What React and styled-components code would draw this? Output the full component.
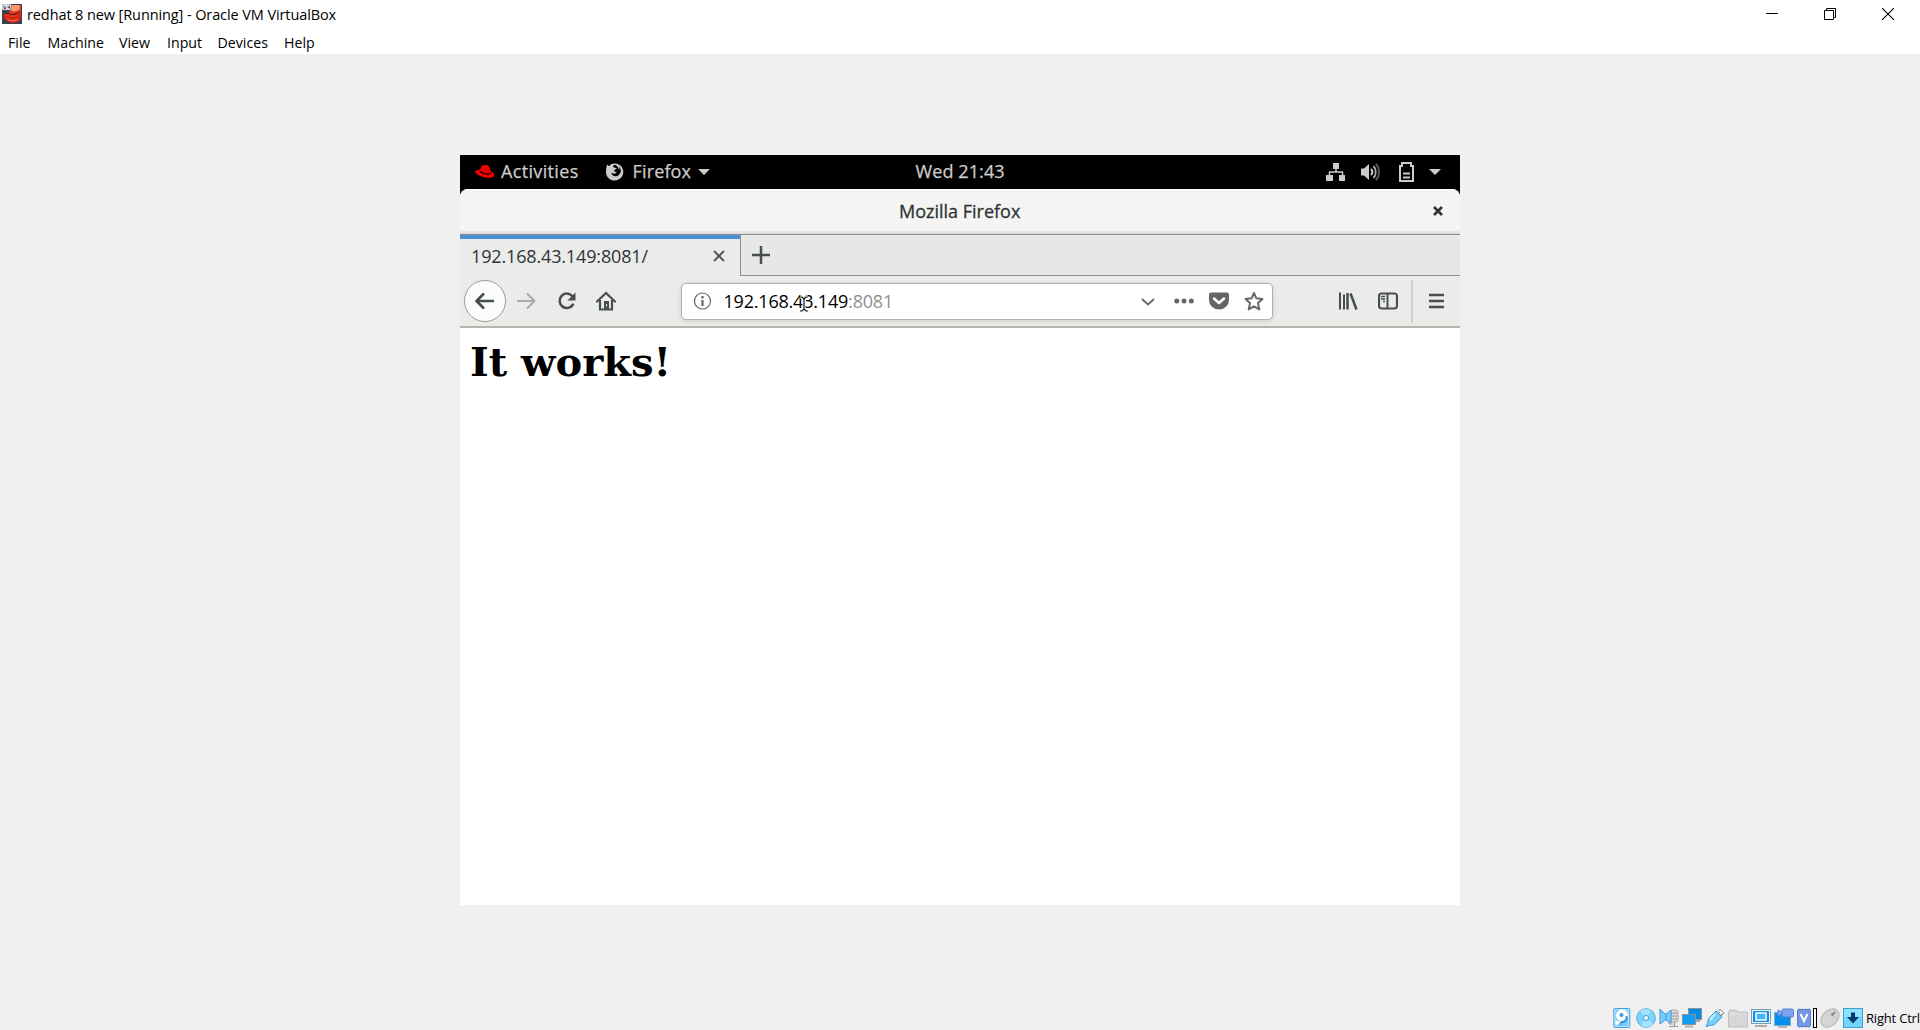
import React from "react";
import styled, { createGlobalStyle } from "styled-components";

const GlobalStyle = createGlobalStyle`
  html, body { margin: 0; height: 100%; overflow: hidden; }
  *, *::before, *::after { box-sizing: border-box; }
  svg { display: block; flex: none; }
`;

const Host = styled.div`
  width: 1920px;
  height: 1030px;
  display: flex;
  flex-direction: column;
  background: #f0f0f0;
  color: #000;
  font-family: "Open Sans", "Noto Sans", sans-serif;
`;

const TitleBar = styled.header`
  display: flex;
  align-items: center;
  height: 30px;
  padding: 0 26px 2px 2px;
  background: #fff;
`;

const HostTitle = styled.span`
  margin-left: 5px;
  flex: 1;
  font-size: 14.5px;
  line-height: 28px;
  padding-top: 1px;
  letter-spacing: -0.1px;
  white-space: pre;
`;

const WindowButtons = styled.div`
  display: flex;
  gap: 46px;
  align-items: center;
  height: 28px;
`;

const MenuBar = styled.nav`
  display: flex;
  height: 24px;
  padding-left: 8px;
  background: #fff;
`;

const MenuItem = styled.span`
  width: ${(p) => p.$width}px;
  font-size: 14.2px;
  line-height: 25px;
  white-space: nowrap;
`;

const Viewport = styled.main`
  flex: 1;
  display: flex;
  justify-content: center;
  align-items: flex-start;
  padding-top: 101px;
`;

const Guest = styled.section`
  position: relative;
  width: 1000px;
  height: 750px;
  display: flex;
  flex-direction: column;
  background: #000;
`;

const Panel = styled.div`
  display: grid;
  grid-template-columns: 1fr auto 1fr;
  align-items: center;
  height: 34px;
  padding: 0 19px 0 15px;
  color: #ccc;
`;

const PanelGroup = styled.div`
  display: flex;
  align-items: center;
  justify-content: ${(p) => (p.$end ? "flex-end" : "flex-start")};
`;

const PanelText = styled.span`
  width: ${(p) => p.$width}px;
  margin: 0 ${(p) => p.$right || 0}px 0 ${(p) => p.$left || 0}px;
  font-size: 18px;
  font-weight: 500;
  line-height: 32px;
  padding-bottom: 2px;
  letter-spacing: ${(p) => p.$track || 0}px;
  -webkit-text-stroke: 0.25px currentColor;
  white-space: nowrap;
`;

const Spacer = styled.i`
  flex: none;
  width: ${(p) => p.$width}px;
`;

const Browser = styled.div`
  flex: 1;
  display: flex;
  flex-direction: column;
  overflow: hidden;
  border-radius: 8px 8px 0 0;
  background: #fff;
`;

const BrowserHeader = styled.div`
  display: grid;
  grid-template-columns: 1fr auto 1fr;
  align-items: center;
  height: 46px;
  padding: 0 17px 2px;
  background: linear-gradient(#fff 0 1px, #f4f4f3 1px 42px, #e6e6e4 42px 44px, #d8d8d5 44px 45px, #8e8f8a 45px);
  color: #2e3436;
`;

const BrowserTitle = styled.h2`
  grid-column: 2;
  margin: 0;
  width: 122px;
  font-size: 18px;
  font-weight: 500;
  line-height: 42px;
  -webkit-text-stroke: 0.3px currentColor;
  white-space: nowrap;
`;

const CloseSlot = styled.div`
  display: flex;
  justify-content: flex-end;
`;

const TabStrip = styled.div`
  display: flex;
  height: 41px;
  background: #e7e7e5;
`;

const Tab = styled.div`
  display: flex;
  align-items: center;
  width: 281px;
  padding: 1px 15px 0 11px;
  border-right: 1px solid #8e8f8a;
  background: linear-gradient(#4a90d9 0 4px, #ebebea 4px);
  color: #2e3436;
`;

const TabText = styled.span`
  flex: 1;
  font-size: 18px;
  line-height: 40px;
  letter-spacing: -0.15px;
`;

const StripRest = styled.div`
  flex: 1;
  display: flex;
  align-items: center;
  padding-left: 11px;
  border-bottom: 1px solid #8e8f8a;
`;

const Toolbar = styled.div`
  display: flex;
  align-items: center;
  height: 52px;
  padding: 0 16px 0 4px;
  border-bottom: 2px solid #b6b6b0;
  background: #ebebe9;
`;

const BackButton = styled.div`
  display: flex;
  align-items: center;
  justify-content: center;
  width: 42px;
  height: 42px;
  border: 1px solid #9d9d99;
  border-radius: 50%;
  background: #fcfcfc;
`;

const UrlField = styled.div`
  display: flex;
  align-items: center;
  width: 592px;
  height: 37px;
  margin-left: 65px;
  padding: 0 8px 0 12px;
  border: 1px solid #b0b0ac;
  border-radius: 5px;
  background: #fff;
  box-shadow: 0 1px 5px rgba(0, 0, 0, 0.13);
`;

const UrlText = styled.span`
  flex: 1;
  margin-left: 11.5px;
  color: #000;
  font-size: 18px;
  line-height: 34px;
  letter-spacing: -0.5px;
  letter-spacing: -0.2px;
`;

const Port = styled.span`
  color: #8f8f8f;
`;

const Divider = styled.i`
  width: 2px;
  height: 43px;
  margin: 0 16px 0 13px;
  background: #d0d0ce;
`;

const Page = styled.article`
  flex: 1;
  padding: 10px 10px;
  background: #fff;
`;

const Heading = styled.h1`
  margin: 0;
  font: bold 40px/47px "DejaVu Serif", serif;
  color: #000;
  white-space: nowrap;
`;

const Pointer = styled.svg`
  position: absolute;
  left: 339px;
  top: 140px;
`;

const StatusBar = styled.footer`
  display: flex;
  align-items: center;
  justify-content: flex-end;
  height: 24px;
  gap: 3px;
`;

const ActivityBar = styled.i`
  width: 4px;
  height: 20px;
  margin-left: -1px;
  border: 1px solid #000;
  background: #f6f6f6;
`;

const HostKey = styled.span`
  width: 54px;
  font-size: 13px;
  line-height: 22px;
  letter-spacing: -0.2px;
  white-space: nowrap;
`;

const Icon = ({ w = 20, h = 20, children, ...rest }) => (
  <svg width={w} height={h} viewBox={`0 0 ${w} ${h}`} fill="none" {...rest}>
    {children}
  </svg>
);

const MachineIcon = () => (
  <Icon>
    <rect width="20" height="20" fill="#38424e" />
    <path d="M8 1h11v8c0 3-2 4-4 5-5 0-10 0-13-3 2-1 4-1 5-2z" fill="#e53a20" />
    <path d="M9 1h8c2 3 0 6-3 6-3 1-5 0-6-2z" fill="#ff9672" />
    <path d="M5 9c3 2 8 2 13-1" stroke="#6e1712" strokeWidth="1.300" />
    <path d="M1 9c2 4 10 5 14 3 2-1 4-3 4-5v6c0 4-4 6-9 6-5-1-9-4-9-10z" fill="#d82412" />
    <path d="M3 13c4 4 10 4 14 1-2 4-10 5-14-1z" fill="#ff8461" />
    <rect width="9" height="6" fill="#f5f5f5" stroke="#59616b" strokeWidth=".6" />
    <path d="M2 1.500v3M2 3h2v1.500H2M6 1.500v2h2M7.500 1.500v3.500" stroke="#444" strokeWidth=".8" />
  </Icon>
);

const HatIcon = () => (
  <Icon h={16}>
    <path d="M7 1.500c1-1 2.200-.5 3.200-.2 1-.6 3.500 0 4 1.400l1.500 4.600c2.700.8 4 2.700 3.300 4.500-.8 2.200-4.500 2.800-8.500 1.800C5 12.200.3 10.200.3 8c0-1.700 2-2.500 4.500-2z" fill="#e00" />
    <path d="M5 6.800c.6 2 5 3.500 8.500 3.400 1.500-.1 2.400-.8 2.200-2" stroke="#000" strokeWidth="1.200" />
  </Icon>
);

const FirefoxIcon = () => (
  <Icon>
    <path d="M2.200 2.500 4 4.300C5.300 2.700 7 1.500 9.500 1.500c5.300 0 8.800 3.700 8.800 8.500s-3.800 8.500-8.600 8.500S1 14.800 1 10.200C1 7 1.300 5 2.200 2.500z" fill="#ccc" />
    <path d="M9 2.800c-.8.800-1 2-.3 2.700l3 .6c-.2 1.500-2.500 1.800-2.700 2.500.1 1.200 1.200 1.800 2.900 1.200-1 2.200-4 2.500-5.500.8.3 3.500 3.500 4.400 6 3.300 4-1.800 4.400-6.500 1.700-9.300.5 1.700.4 2.700 0 3.600C13.500 5.200 12 3.200 9 2.800z" fill="#000" />
  </Icon>
);

const Caret = () => (
  <Icon w={12} h={6}>
    <path d="M0 0h12L6 6z" fill="#ccc" />
  </Icon>
);

const NetworkIcon = () => (
  <Icon>
    <path d="M10 7v3M3.500 14v-4h13v4" stroke="#ccc" strokeWidth="1.500" />
    <path d="M7 1h6v6H7zM0 13h7v6H0zM13 13h6v6h-6z" fill="#ccc" />
  </Icon>
);

const VolumeIcon = () => (
  <Icon>
    <path d="M0 6.500h3L8 2v16l-5-4.500H0z" fill="#ccc" />
    <path d="M10 7c1.800 2 1.800 4 0 6" stroke="#ccc" strokeWidth="2" />
    <path d="M12.500 4c3 3 3 9 0 12" stroke="#aaa" strokeWidth="1.800" />
    <path d="M15 2c4 4 4 12 0 16" stroke="#555" strokeWidth="2" />
  </Icon>
);

const BatteryIcon = () => (
  <Icon w={15}>
    <path d="M1 4h2V1h9v3h2v15H1z" stroke="#ccc" strokeWidth="2" />
    <path d="M4 10.500h7v2H4zM4 14.500h7v2H4z" fill="#ccc" />
  </Icon>
);

const Cross = ({ size, color, stroke }) => (
  <Icon w={size} h={size}>
    <path d={`M1 1L${size - 1} ${size - 1}M${size - 1} 1L1 ${size - 1}`} stroke={color} strokeWidth={stroke} />
  </Icon>
);

const ArrowIcon = ({ back }) => (
  <Icon>
    <path d={back ? "M19 10H2M9 2.500 1.500 10 9 17.500" : "M1 10h17M11 2.500l7.500 7.500-7.500 7.500"} stroke={back ? "#474e50" : "#acadab"} strokeWidth={back ? 2.6 : 2.2} strokeLinejoin="round" />
  </Icon>
);

const ReloadIcon = () => (
  <Icon>
    <path d="M15 4.800a7.200 7.200 0 1 0 1 8.700" stroke="#474e50" strokeWidth="2.500" strokeLinecap="round" />
    <path d="M18.500 1.500v8h-8z" fill="#474e50" />
  </Icon>
);

const HomeIcon = () => (
  <Icon>
    <path d="M1 10.500 10 2l9 8.500" stroke="#474e50" strokeWidth="2.200" strokeLinecap="round" />
    <path d="M4 9v9.500h12V9" stroke="#474e50" strokeWidth="2.200" />
    <path d="M8 10h5v8H8z" fill="#474e50" />
    <path d="M10.500 13v2.500" stroke="#ebebe9" />
  </Icon>
);

const InfoIcon = () => (
  <Icon w={18} h={18}>
    <circle cx="8.500" cy="9" r="8" stroke="#666" strokeWidth="1.200" />
    <path d="M8.500 4v2.500M8.500 8v6" stroke="#666" strokeWidth="2.200" />
  </Icon>
);

const ChevronIcon = () => (
  <Icon w={14} h={10}>
    <path d="M1 3 7 8.500 13 3" stroke="#666" strokeWidth="1.700" />
  </Icon>
);

const DotsIcon = () => (
  <Icon>
    <circle cx="2.800" cy="10" r="2.500" fill="#666" />
    <circle cx="10" cy="10" r="2.500" fill="#666" />
    <circle cx="17.300" cy="10" r="2.500" fill="#666" />
  </Icon>
);

const PocketIcon = () => (
  <Icon>
    <path d="M2 1.500h16q2 0 2 2V9a10 9.500 0 0 1-20 0V3.500q0-2 2-2z" fill="#666" />
    <path d="m5 7.500 5 4.500 5-4.500" stroke="#fff" strokeWidth="2.500" strokeLinecap="round" strokeLinejoin="round" />
  </Icon>
);

const StarIcon = () => (
  <Icon>
    <path d="m10 2 2.400 5.300 6.100.6-4.500 4.200 1.300 6.300-5.300-3-5.300 3L6 12.100 1.500 7.900l6.100-.6z" stroke="#666" strokeWidth="2" strokeLinejoin="round" />
  </Icon>
);

const LibraryIcon = () => (
  <Icon>
    <path d="M2 1.500v17M6 3.500v15" stroke="#474e50" strokeWidth="2" />
    <path d="M9.500 2v16.500M12.500 2.500l6 16" stroke="#474e50" strokeWidth="2.500" />
  </Icon>
);

const SidebarIcon = () => (
  <Icon>
    <rect x="1" y="2.500" width="18" height="15" rx="2.500" stroke="#474e50" strokeWidth="2.200" />
    <path d="M9.500 2v16" stroke="#474e50" strokeWidth="2" />
    <path d="M3 5.500h4M3 8h4M5 10.500h2" stroke="#474e50" strokeWidth="1.300" />
  </Icon>
);

const MenuIcon = () => (
  <Icon w={15}>
    <path d="M0 4h15M0 10h15M0 16h15" stroke="#474e50" strokeWidth="2.600" />
  </Icon>
);

const DeviceIcons = () => (
  <>
    <Icon w={20}>
      <rect x=".8" y=".5" width="16" height="19" rx="1" fill="#b6e6ff" stroke="#4b9fd5" />
      <rect x="2.500" y="2" width="12.500" height="16" fill="#75cbff" />
      <circle cx="9" cy="7.500" r="6" fill="#fff" />
      <circle cx="8.500" cy="7" r="2" fill="#2f9be8" />
      <path d="M13.500 8c1 4-2 6-6 6.500L5 17" stroke="#258bd2" strokeWidth="1.800" />
      <path d="m2 12 6 1.500-3 4-3-1z" fill="#fff" stroke="#8fcdf2" strokeWidth=".6" />
    </Icon>
    <Icon>
      <circle cx="10" cy="10" r="9.300" fill="#7bd4ff" stroke="#5ba5d0" />
      <path d="m10 10-6-7c4-3 9-2 11 0zM10 10l7 6c-4 4-9 4-12 1z" fill="#a4e4ff" />
      <circle cx="10" cy="10" r="2.600" fill="#e9faff" stroke="#4a9bc9" />
    </Icon>
    <Icon>
      <rect x="12" y="2" width="7" height="12" rx="1.500" fill="#ddd" stroke="#a3a3a3" />
      <path d="M13 5h5M13 8h5M13 11h5M15.500 14v4M10 18.500h9M10 12v4h4" stroke="#989898" />
      <path d="m1 1 5 5h1l5-4v13l-5-3H6l-5 4z" fill="#71cfff" stroke="#4696d5" />
      <path d="M7 6v6" stroke="#4696d5" />
    </Icon>
    <Icon>
      <rect x="6.500" y=".5" width="13" height="11" fill="#078be8" stroke="#8d9499" />
      <path d="M13 13h5" stroke="#aaa" strokeWidth="2" />
      <rect x=".5" y="6.500" width="13" height="10" fill="#149cf3" stroke="#8d9499" />
      <path d="M3 18.500h8" stroke="#b3b3b3" strokeWidth="2" />
    </Icon>
    <Icon>
      <path d="m12 5 3-4 4 4-4 4z" fill="#eee" stroke="#939393" />
      <path d="M14 4l1 1M16 6l1 1" stroke="#777" />
      <path d="m11 3 6 6-5 5c-2 3-5 4-8 3l-2 2-1-1 2-3c-1-3 1-5 3-7z" fill="#76cffb" stroke="#4b91cc" />
      <path d="m10 6-5 6" stroke="#c6efff" strokeWidth="2" />
    </Icon>
    <Icon>
      <path d="M.5 3.500 2 2h6l2 2h9.500v15H.5z" fill="#d7d7d7" stroke="#c0c0c0" />
      <path d="M1 6h18" stroke="#e4e4e4" />
    </Icon>
    <Icon>
      <rect x=".5" y="1.500" width="19" height="14" fill="#e9f7ff" stroke="#7a9cb1" />
      <rect x="2" y="3" width="16" height="11" fill="#168de8" />
      <rect x="5" y="5" width="10" height="7" fill="#3fb5ff" stroke="#fff" strokeWidth="1.500" />
      <path d="M4 18h12" stroke="#adadad" strokeWidth="2" />
    </Icon>
    <Icon>
      <rect x=".5" y="4.500" width="16" height="13" fill="#0790ed" stroke="#7cacc8" />
      <path d="M4 19h9" stroke="#b7b7b7" strokeWidth="2" />
      <rect x="8" y="1" width="11.500" height="8" rx="1.500" fill="#7aa4ef" stroke="#5a7cce" />
      <path d="m8 4-4-2v6l4-2z" fill="#83adff" stroke="#5a7cce" />
    </Icon>
    <Icon w={14}>
      <path d="M2 .5v19M5 .5v19M9 .5v19M12 .5v19" stroke="#496ab9" strokeDasharray="2 1" />
      <rect x=".5" y="1.500" width="13" height="17" rx="1" fill="#7498e8" stroke="#597bc9" />
      <path d="m3.500 6 3.500 7 3.500-7" stroke="#fff" strokeWidth="2" />
    </Icon>
    <ActivityBar />
    <Icon>
      <ellipse cx="10" cy="10" rx="7.500" ry="10.500" transform="rotate(45 10 10)" fill="#d5d5d5" stroke="#b4b4b4" />
      <path d="m9 3 8 8" stroke="#bbb" />
      <path d="m11.500 7.500 3.500-3.500" stroke="#888" strokeWidth="2" />
    </Icon>
    <Icon>
      <rect x=".5" y=".5" width="19" height="19" fill="#72d5ff" stroke="#3f9fce" />
      <path d="M1 1h18v8H1z" fill="#8ee2ff" />
      <path d="M8 4.500h4V9h4l-6 6.500L4 9h4z" fill="#073b70" />
    </Icon>
  </>
);

const menus = [
  ["File", 39.5],
  ["Machine", 71.5],
  ["View", 48],
  ["Input", 50.5],
  ["Devices", 66.5],
  ["Help", 40],
];

export default function App() {
  return (
    <Host>
      <GlobalStyle />
      <TitleBar>
        <MachineIcon />
        <HostTitle>redhat 8 new [Running] - Oracle VM VirtualBox</HostTitle>
        <WindowButtons>
          <Icon w={12} h={12}><path d="M0 5.500h12" stroke="#000" /></Icon>
          <Icon w={12} h={12}><path d="M.5 2.500h9v9h-9zM2.500 2.500v-2h9v9h-2" stroke="#000" /></Icon>
          <Icon w={12} h={12}><path d="m0 0 12 12M12 0 0 12" stroke="#000" strokeWidth="1.100" /></Icon>
        </WindowButtons>
      </TitleBar>
      <MenuBar>
        {menus.map(([name, width]) => (
          <MenuItem key={name} $width={width}>{name}</MenuItem>
        ))}
      </MenuBar>
      <Viewport>
        <Guest>
          <Panel>
            <PanelGroup>
              <HatIcon />
              <PanelText $width={79} $left={6} $right={25} $track={0.35}>Activities</PanelText>
              <FirefoxIcon />
              <PanelText $width={58} $left={7.5} $right={7.5} $track={0.15}>Firefox</PanelText>
              <Caret />
            </PanelGroup>
            <PanelText $width={90} $left={5} $track={0.1}>Wed 21:43</PanelText>
            <PanelGroup $end>
              <NetworkIcon />
              <Spacer $width={15} />
              <VolumeIcon />
              <Spacer $width={18} />
              <BatteryIcon />
              <Spacer $width={15} />
              <Caret />
            </PanelGroup>
          </Panel>
          <Browser>
            <BrowserHeader>
              <BrowserTitle>Mozilla Firefox</BrowserTitle>
              <CloseSlot><Cross size={10} color="#2e3436" stroke={2.6} /></CloseSlot>
            </BrowserHeader>
            <TabStrip>
              <Tab>
                <TabText>192.168.43.149:8081/</TabText>
                <Cross size={12} color="#54595b" stroke={2} />
              </Tab>
              <StripRest>
                <Icon w={18} h={18}><path d="M9 0v18M0 9h18" stroke="#474e50" strokeWidth="2.500" /></Icon>
              </StripRest>
            </TabStrip>
            <Toolbar>
              <BackButton><ArrowIcon back /></BackButton>
              <Spacer $width={10} />
              <ArrowIcon />
              <Spacer $width={21} />
              <ReloadIcon />
              <Spacer $width={19} />
              <HomeIcon />
              <UrlField>
                <InfoIcon />
                <UrlText>192.168.43.149<Port>:8081</Port></UrlText>
                <ChevronIcon />
                <Spacer $width={19} />
                <DotsIcon />
                <Spacer $width={15} />
                <PocketIcon />
                <Spacer $width={15} />
                <StarIcon />
              </UrlField>
              <Spacer $width={65} />
              <LibraryIcon />
              <Spacer $width={20} />
              <SidebarIcon />
              <Divider />
              <MenuIcon />
            </Toolbar>
            <Page><Heading>It works!</Heading></Page>
          </Browser>
          <Pointer width="10" height="18" viewBox="0 0 10 18" fill="none">
            <path d="M1 2h2l2 2 2-2h2M5 4v10M1 16h2l2-2 2 2h2" stroke="#fff" strokeWidth="3" />
            <path d="M1 2h2l2 2 2-2h2M5 4v10M1 16h2l2-2 2 2h2" stroke="#111" strokeWidth="1.200" />
          </Pointer>
        </Guest>
      </Viewport>
      <StatusBar>
        <DeviceIcons />
        <HostKey>Right Ctrl</HostKey>
      </StatusBar>
    </Host>
  );
}
